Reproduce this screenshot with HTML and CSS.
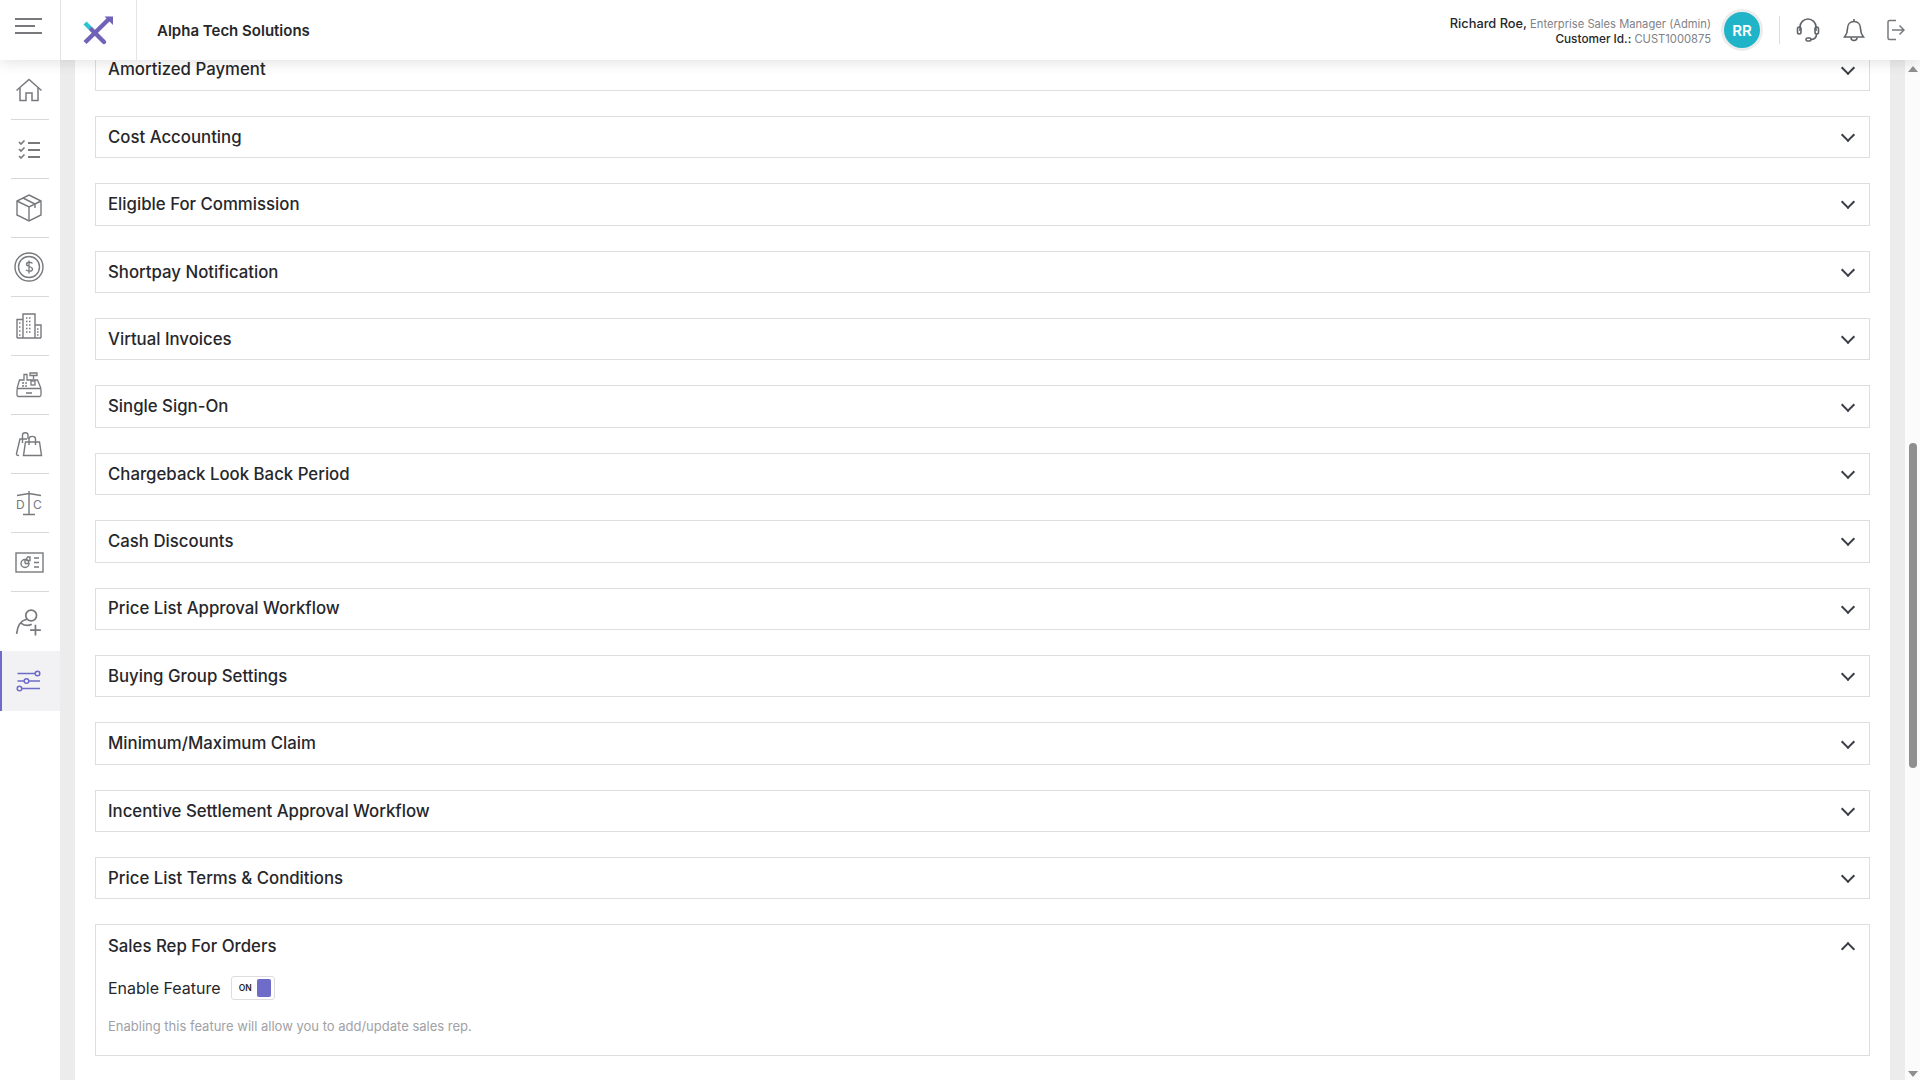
FILE: index.html
```html
<!DOCTYPE html>
<html lang="en">
<head>
    <meta charset="UTF-8">
    <title>Alpha Tech Solutions</title>
    <link rel="stylesheet" href="styles.css">
</head>
<body>
    <header class="topbar">
        <div class="menu-cell">
            <span class="bar"></span>
            <span class="bar short"></span>
            <span class="bar"></span>
        </div>
        <div class="logo-cell">
            <svg width="34" height="34" viewBox="0 0 34 34" fill="none" stroke-width="4.400">
                <path d="M4 29.500 29 5" stroke="#6f63b8"/>
                <path d="M23.500 3.500H32V12Z" fill="#6f63b8" stroke="none"/>
                <path d="M4 10 10.500 16.500" stroke="#2cc3d2"/>
                <path d="M10.500 16.500 23 29" stroke="#6f63b8" stroke-linecap="round"/>
            </svg>
        </div>
        <div class="company">Alpha Tech Solutions</div>
        <div class="user">
            <div class="user-line"><b>Richard Roe,</b> Enterprise Sales Manager (Admin)</div>
            <div class="user-line second"><b>Customer Id.:</b> CUST1000875</div>
        </div>
        <div class="avatar">RR</div>
        <div class="divider"></div>
        <svg class="top-icon headset" width="24" height="26" viewBox="0 0 24 26" fill="none" stroke="#5f6368" stroke-width="1.600">
            <path d="M4 14V10a8 8 0 0 1 16 0v4"/>
            <rect x="1.500" y="10" width="3.500" height="7" rx="1.700"/>
            <rect x="19" y="10" width="3.500" height="7" rx="1.700"/>
            <path d="M20.500 17c0 4-3 5.500-6 5.500"/>
            <rect x="10" y="21" width="5" height="3" rx="1.500"/>
        </svg>
        <svg class="top-icon bell" width="22" height="24" viewBox="0 0 22 24" fill="none" stroke="#5f6368" stroke-width="1.600">
            <path d="M11 3.500c-4 0-6.500 3-6.500 7 0 5-1.500 6.500-3 8.500h19c-1.500-2-3-3.500-3-8.500 0-4-2.500-7-6.500-7Z"/>
            <path d="M11 1v2.500M8 19.500c0 4 6 4 6 0"/>
        </svg>
        <svg class="top-icon logout" width="18" height="22" viewBox="0 0 18 22" fill="none" stroke="#77797d" stroke-width="1.500">
            <path d="M9 1.500H2.500a1.500 1.500 0 0 0-1.500 1.500v16a1.500 1.500 0 0 0 1.500 1.500H9"/>
            <path d="M5 11h12M12.500 6.500 17 11l-4.500 4.500"/>
        </svg>
    </header>

    <div class="shell">
        <nav class="sidebar">
            <a class="nav-item">
                <svg width="28" height="24" viewBox="0 0 28 24" fill="none" stroke="#77797d" stroke-width="1.500">
                    <path d="M1.500 12.500 14 1.500l12.500 11"/>
                    <path d="M5 10v12.500h6V15h6v7.500h6V10"/>
                </svg>
            </a>
            <a class="nav-item">
                <svg width="24" height="20" viewBox="0 0 24 20" fill="none" stroke="#77797d" stroke-width="1.600">
                    <path d="M2 3 4 5 7.500 1.500M2 10 4 12 7.500 8.500M2 17 4 19 7.500 15.500"/>
                    <path d="M11 4h12M11 11h12M11 18h12" stroke-width="2"/>
                </svg>
            </a>
            <a class="nav-item">
                <svg width="26" height="28" viewBox="0 0 26 28" fill="none" stroke="#77797d" stroke-width="1.400">
                    <path d="M13 1 25 7v14l-12 6-12-6V7Z"/>
                    <path d="M1 7l12 6 12-6M13 13v14M7 4l12 6v4"/>
                </svg>
            </a>
            <a class="nav-item">
                <svg width="30" height="30" viewBox="0 0 30 30" fill="none" stroke="#77797d" stroke-width="1.400">
                    <path d="M15 1a14 14 0 0 1 14 14M29 15a14 14 0 0 1-14 14M15 29A14 14 0 0 1 1 15M1 15A14 14 0 0 1 15 1"/>
                    <circle cx="15" cy="15" r="10.500"/>
                    <path d="M18.500 11.500c-.8-1.500-5.500-2-6 .5-.5 3 6.500 2 6 5.500-.4 2.500-5.500 2-6.500.2M15 8.500v13" stroke-width="1.300"/>
                </svg>
            </a>
            <a class="nav-item">
                <svg width="26" height="28" viewBox="0 0 26 28" fill="none" stroke="#77797d" stroke-width="1.400">
                    <path d="M1 26V7.500h6M7 26V2h12v24M19 13h6v13M1 26h24"/>
                    <path d="M10 6h6M10 9.500h6M10 13h6M10 16.500h6M10 20h6M3 11h2M3 15h2M3 19h2M3 23h2M21 17h2M21 20h2M21 23h2" stroke-dasharray="1.500 1.500"/>
                </svg>
            </a>
            <a class="nav-item">
                <svg width="26" height="26" viewBox="0 0 26 26" fill="none" stroke="#77797d" stroke-width="1.300">
                    <path d="M1 16.500 3.500 8H8V2.500h3V8h10.500L25 16.500"/>
                    <rect x="1" y="16.500" width="24" height="8" rx="1.500"/>
                    <path d="M10 21h6M14 1h7v2.500h-7ZM17.500 3.500V7"/>
                    <rect x="15" y="9" width="4" height="4"/>
                    <path d="M6 11h5M6 14h5" stroke-dasharray="2 1.200"/>
                </svg>
            </a>
            <a class="nav-item">
                <svg width="28" height="26" viewBox="0 0 28 26" fill="none" stroke="#77797d" stroke-width="1.400">
                    <path d="M4 24.500c-2 0-2.800-.8-2.500-2L5 8h7"/>
                    <path d="M7.500 12V4c0-3 5.500-3 5.500 0v4"/>
                    <path d="M10.500 11h14l2 13.500h-18Z"/>
                    <path d="M14 14V8c0-3.500 6.500-3.500 6.500 0v6"/>
                </svg>
            </a>
            <a class="nav-item">
                <svg width="28" height="26" viewBox="0 0 28 26" fill="none" stroke="#77797d" stroke-width="1.400">
                    <path d="M14 1v23M8 24.500h12M2 5.500 14 3.500l12 2"/>
                    <text x="1" y="19" class="scale-text">D</text>
                    <text x="18" y="19" class="scale-text">C</text>
                </svg>
            </a>
            <a class="nav-item">
                <svg width="29" height="21" viewBox="0 0 29 21" fill="none" stroke="#77797d" stroke-width="1.400">
                    <rect x="1" y="1" width="27" height="19"/>
                    <circle cx="10" cy="11.500" r="4"/>
                    <path d="M10 11.500V7.500M10 11.500h4M14 5h-1.500a3 3 0 0 0-.5 3.500h3V5Z"/>
                    <path d="M19 6h5M19 10.500h5M19 15h5"/>
                </svg>
            </a>
            <a class="nav-item no-line">
                <svg width="28" height="28" viewBox="0 0 26 26" fill="none" stroke="#77797d" stroke-width="1.600">
                    <circle cx="15" cy="7" r="5"/>
                    <path d="M11 10.500a4.500 4.500 0 0 0-1 .2C5 12 2.500 16 1.500 24"/>
                    <path d="M5.500 14c3.500 2.500 7.500 2.500 10 1M19 15.500v10M14 20.500h10" />
                </svg>
            </a>
            <a class="nav-item active">
                <svg width="26" height="22" viewBox="0 0 26 22" fill="none" stroke="#6f6bc9" stroke-width="1.500">
                    <path d="M1.500 3.500H19M1.500 11H8M13 11H24M6 18.500H24"/>
                    <circle cx="21.500" cy="3.500" r="2.300"/>
                    <circle cx="10.500" cy="11" r="2.300"/>
                    <circle cx="3.500" cy="18.500" r="2.300"/>
                </svg>
            </a>
        </nav>

        <main class="content">
            <div class="panel">
                <section class="card"><h3>Amortized Payment</h3><span class="chevron"></span></section>
                <section class="card"><h3>Cost Accounting</h3><span class="chevron"></span></section>
                <section class="card"><h3>Eligible For Commission</h3><span class="chevron"></span></section>
                <section class="card"><h3>Shortpay Notification</h3><span class="chevron"></span></section>
                <section class="card"><h3>Virtual Invoices</h3><span class="chevron"></span></section>
                <section class="card"><h3>Single Sign-On</h3><span class="chevron"></span></section>
                <section class="card"><h3>Chargeback Look Back Period</h3><span class="chevron"></span></section>
                <section class="card"><h3>Cash Discounts</h3><span class="chevron"></span></section>
                <section class="card"><h3>Price List Approval Workflow</h3><span class="chevron"></span></section>
                <section class="card"><h3>Buying Group Settings</h3><span class="chevron"></span></section>
                <section class="card"><h3>Minimum/Maximum Claim</h3><span class="chevron"></span></section>
                <section class="card"><h3>Incentive Settlement Approval Workflow</h3><span class="chevron"></span></section>
                <section class="card"><h3>Price List Terms &amp; Conditions</h3><span class="chevron"></span></section>
                <section class="card open">
                    <div class="card-head"><h3>Sales Rep For Orders</h3><span class="chevron up"></span></div>
                    <div class="feature">
                        <span>Enable Feature</span>
                        <span class="toggle"><span class="toggle-label">ON</span><span class="knob"></span></span>
                    </div>
                    <p class="hint">Enabling this feature will allow you to add/update sales rep.</p>
                </section>
            </div>
        </main>

        <div class="scrollbar">
            <span class="arrow"></span>
            <span class="thumb"></span>
            <span class="arrow down"></span>
        </div>
    </div>
</body>
</html>
```

FILE: styles.css
```css
* {
    margin: 0;
    padding: 0;
    box-sizing: border-box;
}

body {
    font-family: 'Inter', 'Open Sans', sans-serif;
    color: #26272b;
    background: #fff;
    height: 1080px;
    overflow: hidden;
}

/* top bar */
.topbar {
    position: relative;
    z-index: 2;
    height: 60px;
    display: flex;
    align-items: center;
    background: #fff;
    box-shadow: 0 2px 14px rgba(0, 0, 0, 0.12);
}

.menu-cell {
    width: 61px;
    height: 60px;
    padding: 18px 0 0 15px;
    border-right: 1px solid #e4e4e4;
    display: flex;
    flex-direction: column;
    gap: 5px;
}

.bar {
    display: block;
    width: 27px;
    height: 2px;
    background: #77797d;
}

.bar.short {
    width: 20px;
}

.logo-cell {
    width: 76px;
    height: 60px;
    padding-right: 2px;
    border-right: 1px solid #e4e4e4;
    display: flex;
    align-items: center;
    justify-content: center;
}

.company {
    margin-left: 20px;
    font-size: 15px;
    font-weight: 600;
}

.user {
    margin-left: auto;
    padding-top: 2px;
    text-align: right;
    font-size: 11.2px;
    color: #808287;
}

.user b {
    color: #26272b;
    font-weight: 500;
}

.user-line b {
    font-size: 12.8px;
}

.user-line.second b {
    font-size: 11.8px;
}

.user-line.second {
    margin-top: 1px;
}

.avatar {
    width: 42px;
    height: 42px;
    margin-left: 10px;
    margin-right: -1px;
    border-radius: 50%;
    border: 3px solid #ececec;
    background: #20b4c8;
    color: #fff;
    font-size: 15px;
    font-weight: 600;
    display: flex;
    align-items: center;
    justify-content: center;
}

.divider {
    width: 1px;
    height: 28px;
    margin-left: 17px;
    background: #dcdcdc;
}

.headset {
    margin-left: 16px;
}

.bell {
    margin-left: 23px;
}

.logout {
    margin-left: 22px;
    margin-right: 15px;
}

/* page below the bar */
.shell {
    display: flex;
    height: 1020px;
}

.sidebar {
    width: 60px;
    flex: none;
    background: #fff;
    padding-top: 1px;
}

.nav-item {
    display: flex;
    align-items: center;
    justify-content: center;
    height: 59px;
    margin: 0 11px;
    padding-right: 2px;
    border-bottom: 1px solid #d8d8d8;
}

.nav-item.no-line {
    border-bottom: none;
}

.nav-item.active {
    margin: 0;
    height: 60px;
    padding-right: 4px;
    border-bottom: none;
    border-left: 2px solid #6f6bc9;
    background: #f2f2f4;
}

.scale-text {
    font-family: 'Inter', sans-serif;
    font-size: 12px;
    fill: #77797d;
    stroke: none;
}

.content {
    flex: 1;
    background: #ececec;
    padding: 0 15px;
    overflow: hidden;
}

.panel {
    display: flow-root;
    height: 100%;
    background: #fff;
    padding: 0 20px;
}

.card {
    display: flex;
    align-items: center;
    justify-content: space-between;
    height: 42.4px;
    margin-bottom: 25px;
    padding: 0 10px 0 12px;
    border: 1.5px solid #dedede;
    background: #fff;
}

.card:first-child {
    margin-top: -11.6px;
}

.card h3 {
    font-size: 16.8px;
    font-weight: 500;
    line-height: 1.1;
    color: #26272b;
}

.card:first-child h3 {
    margin-top: -1px;
}

.chevron {
    width: 10px;
    height: 10px;
    margin: -4px 6px 0 0;
    border-right: 2px solid #3a3d45;
    border-bottom: 2px solid #3a3d45;
    transform: rotate(45deg);
}

.chevron.up {
    margin-top: 6px;
    transform: rotate(225deg);
}

.card.open {
    display: block;
    height: 132px;
}

.card-head {
    display: flex;
    align-items: center;
    justify-content: space-between;
    height: 41px;
}

.feature {
    display: flex;
    align-items: center;
    gap: 10px;
    font-size: 16px;
    margin-top: 10px;
}

.toggle {
    display: flex;
    align-items: center;
    justify-content: space-between;
    width: 44px;
    height: 24px;
    padding: 0 3px 0 7px;
    border: 1px solid #ddd;
    border-radius: 3px;
}

.toggle-label {
    font-size: 8.5px;
    font-weight: 600;
}

.knob {
    width: 14px;
    height: 18px;
    border-radius: 2px;
    background: #6f6bc9;
}

.hint {
    margin-top: 18px;
    font-size: 13px;
    color: #a0a1a6;
}

.scrollbar {
    width: 15px;
    flex: none;
    background: #fbfbfb;
    display: flex;
    flex-direction: column;
    align-items: center;
}

.arrow {
    margin-top: 6px;
    border-left: 5px solid transparent;
    border-right: 5px solid transparent;
    border-bottom: 6px solid #8f8f8f;
}

.arrow.down {
    margin-top: auto;
    margin-bottom: 3px;
    border-bottom: none;
    border-top: 6px solid #8f8f8f;
}

.thumb {
    width: 8px;
    height: 325px;
    margin-top: 371px;
    border-radius: 4px;
    background: #8f8f8f;
}
```
